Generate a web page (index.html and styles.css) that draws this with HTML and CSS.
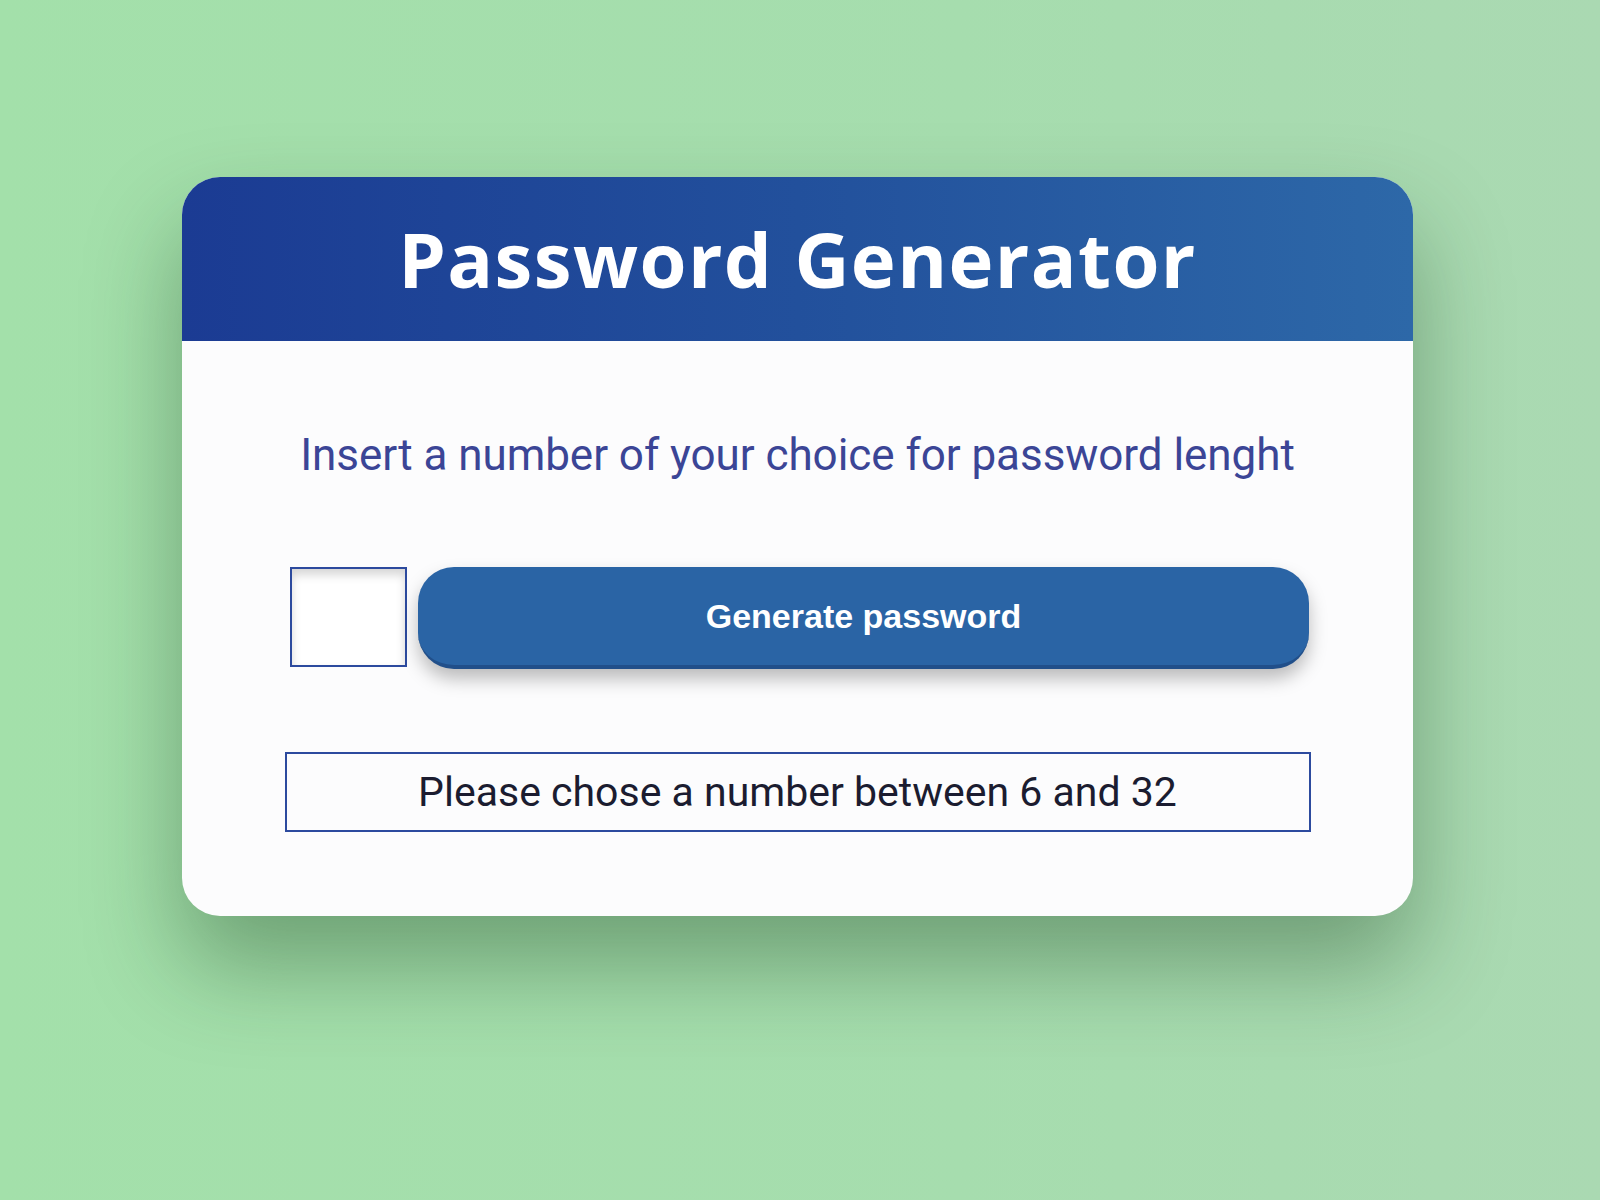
FILE: index.html
```html
<!DOCTYPE html>
<html lang="en">
<head>
<meta charset="UTF-8">
<title>Password Generator</title>
<link rel="stylesheet" href="styles.css">
</head>
<body>
<main class="card">
  <header class="card-header">
    <h1 class="title">Password Generator</h1>
  </header>
  <section class="card-body">
    <p class="subtitle">Insert a number of your choice for password lenght</p>
    <div class="controls">
      <input class="length-input" type="text" aria-label="Password length">
      <button class="generate-btn" type="button">Generate password</button>
    </div>
    <div class="output">Please chose a number between 6 and 32</div>
  </section>
</main>
</body>
</html>
```
FILE: styles.css
```css
html, body {
  margin: 0;
  padding: 0;
}

body {
  width: 1600px;
  height: 1200px;
  overflow: hidden;
  background: linear-gradient(90deg, #a3e0aa 0%, #a6ddae 60%, #aad9b2 100%);
  font-family: Roboto, "Open Sans", sans-serif;
}

.card {
  width: 1231px;
  margin: 177px 0 0 182px;
  border-radius: 38px;
  overflow: hidden;
  background: #fcfcfd;
  box-shadow: 0 50px 95px rgba(20, 60, 25, 0.38);
  display: flex;
  flex-direction: column;
}

.card-header {
  height: 164px;
  background: linear-gradient(90deg, #1b3b93 0%, #22509c 50%, #2d68a8 100%);
  display: flex;
  align-items: center;
  justify-content: center;
}

.title {
  margin: 0;
  color: #ffffff;
  font-family: "Open Sans", sans-serif;
  font-weight: 700;
  font-size: 76px;
  letter-spacing: 1.4px;
  line-height: 1;
}

.card-body {
  padding: 88px 0 84px;
  display: flex;
  flex-direction: column;
  align-items: center;
}

.subtitle {
  margin: 0;
  color: #3b4596;
  font-family: Roboto, sans-serif;
  font-size: 44px;
  line-height: 52px;
  letter-spacing: -0.05px;
}

.controls {
  margin-top: 86px;
  margin-left: 4px;
  width: 1019px;
  display: flex;
  gap: 11px;
  align-items: flex-start;
}

.length-input {
  box-sizing: border-box;
  width: 117px;
  height: 100px;
  margin: 0;
  padding: 0 8px;
  border: 2px solid #2c4a9e;
  border-radius: 0;
  background: #ffffff;
  box-shadow: inset 0 6px 10px rgba(0, 0, 0, 0.16);
  outline: none;
  font-size: 32px;
}

.generate-btn {
  box-sizing: border-box;
  flex: 1;
  height: 102px;
  margin: 0;
  border: none;
  border-bottom: 4px solid #214f8a;
  border-radius: 36px;
  background: #2a64a5;
  color: #ffffff;
  font-family: "Liberation Sans", Arial, sans-serif;
  font-weight: 700;
  font-size: 34px;
  box-shadow: 0 10px 18px rgba(0, 0, 0, 0.26);
  cursor: pointer;
}

.output {
  box-sizing: border-box;
  margin-top: 83px;
  width: 1026px;
  height: 80px;
  border: 2px solid #2c4a9e;
  color: #1b1c30;
  font-family: Roboto, sans-serif;
  font-size: 41px;
  line-height: 76px;
  text-align: center;
}
```
